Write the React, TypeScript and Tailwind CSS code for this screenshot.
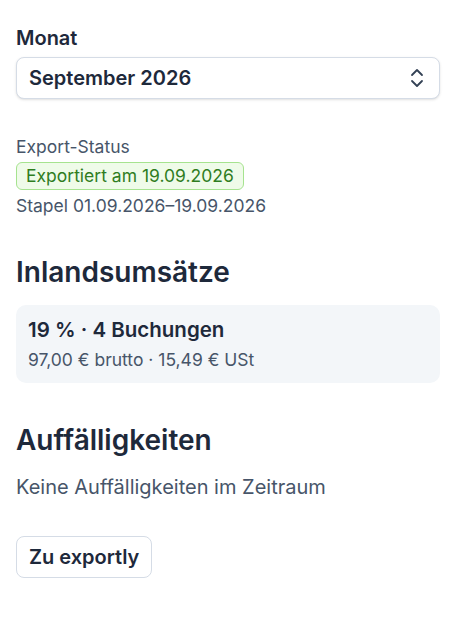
import { ChevronsUpDown } from "lucide-react";

export default function App() {
  return (
    <div className="min-h-screen bg-white px-4 pt-[26px] text-[#1e293b]" style={{ fontFamily: "Inter, 'Noto Sans', sans-serif" }}>
      <label className="block text-[20px] font-semibold leading-6">Monat</label>
      <div className="mt-[7px] flex h-[42px] items-center justify-between rounded-lg border border-[#d5dce6] bg-white pl-3 pr-[10px] shadow-sm">
        <span className="text-[20px] font-semibold">September 2026</span>
        <ChevronsUpDown className="h-6 w-6 text-[#334155]" strokeWidth={1.8} />
      </div>

      <div className="mt-[38px] text-[17.5px] leading-5 text-[#475569]">Export-Status</div>
      <span className="mt-[5px] inline-block rounded-md border border-[#a6e38f] bg-[#effbe9] px-[9px] text-[17.5px] leading-[26px] text-[#2f7d1f]">
        Exportiert am 19.09.2026
      </span>
      <div className="mt-[5px] text-[17.5px] leading-[22px] text-[#475569]">Stapel 01.09.2026–19.09.2026</div>

      <h2 className="mt-[38px] text-[28px] font-semibold leading-[34px]">Inlandsumsätze</h2>
      <div className="mt-[16px] rounded-[10px] bg-[#f3f6f9] px-3 pb-[12px] pt-[12px]">
        <div className="text-[20.5px] font-semibold leading-[26px]">19 % · 4 Buchungen</div>
        <div className="mt-[6px] text-[17.5px] leading-[22px] text-[#475569]">97,00 € brutto · 15,49 € USt</div>
      </div>

      <h2 className="mt-[40px] text-[28px] font-semibold leading-[34px]">Auffälligkeiten</h2>
      <p className="mt-[17px] text-[20px] leading-[26px] text-[#475569]">Keine Auffälligkeiten im Zeitraum</p>

      <button className="mt-[36px] h-[42px] rounded-lg border border-[#d5dce6] bg-white px-3 text-[20px] font-semibold">
        Zu exportly
      </button>
    </div>
  );
}
